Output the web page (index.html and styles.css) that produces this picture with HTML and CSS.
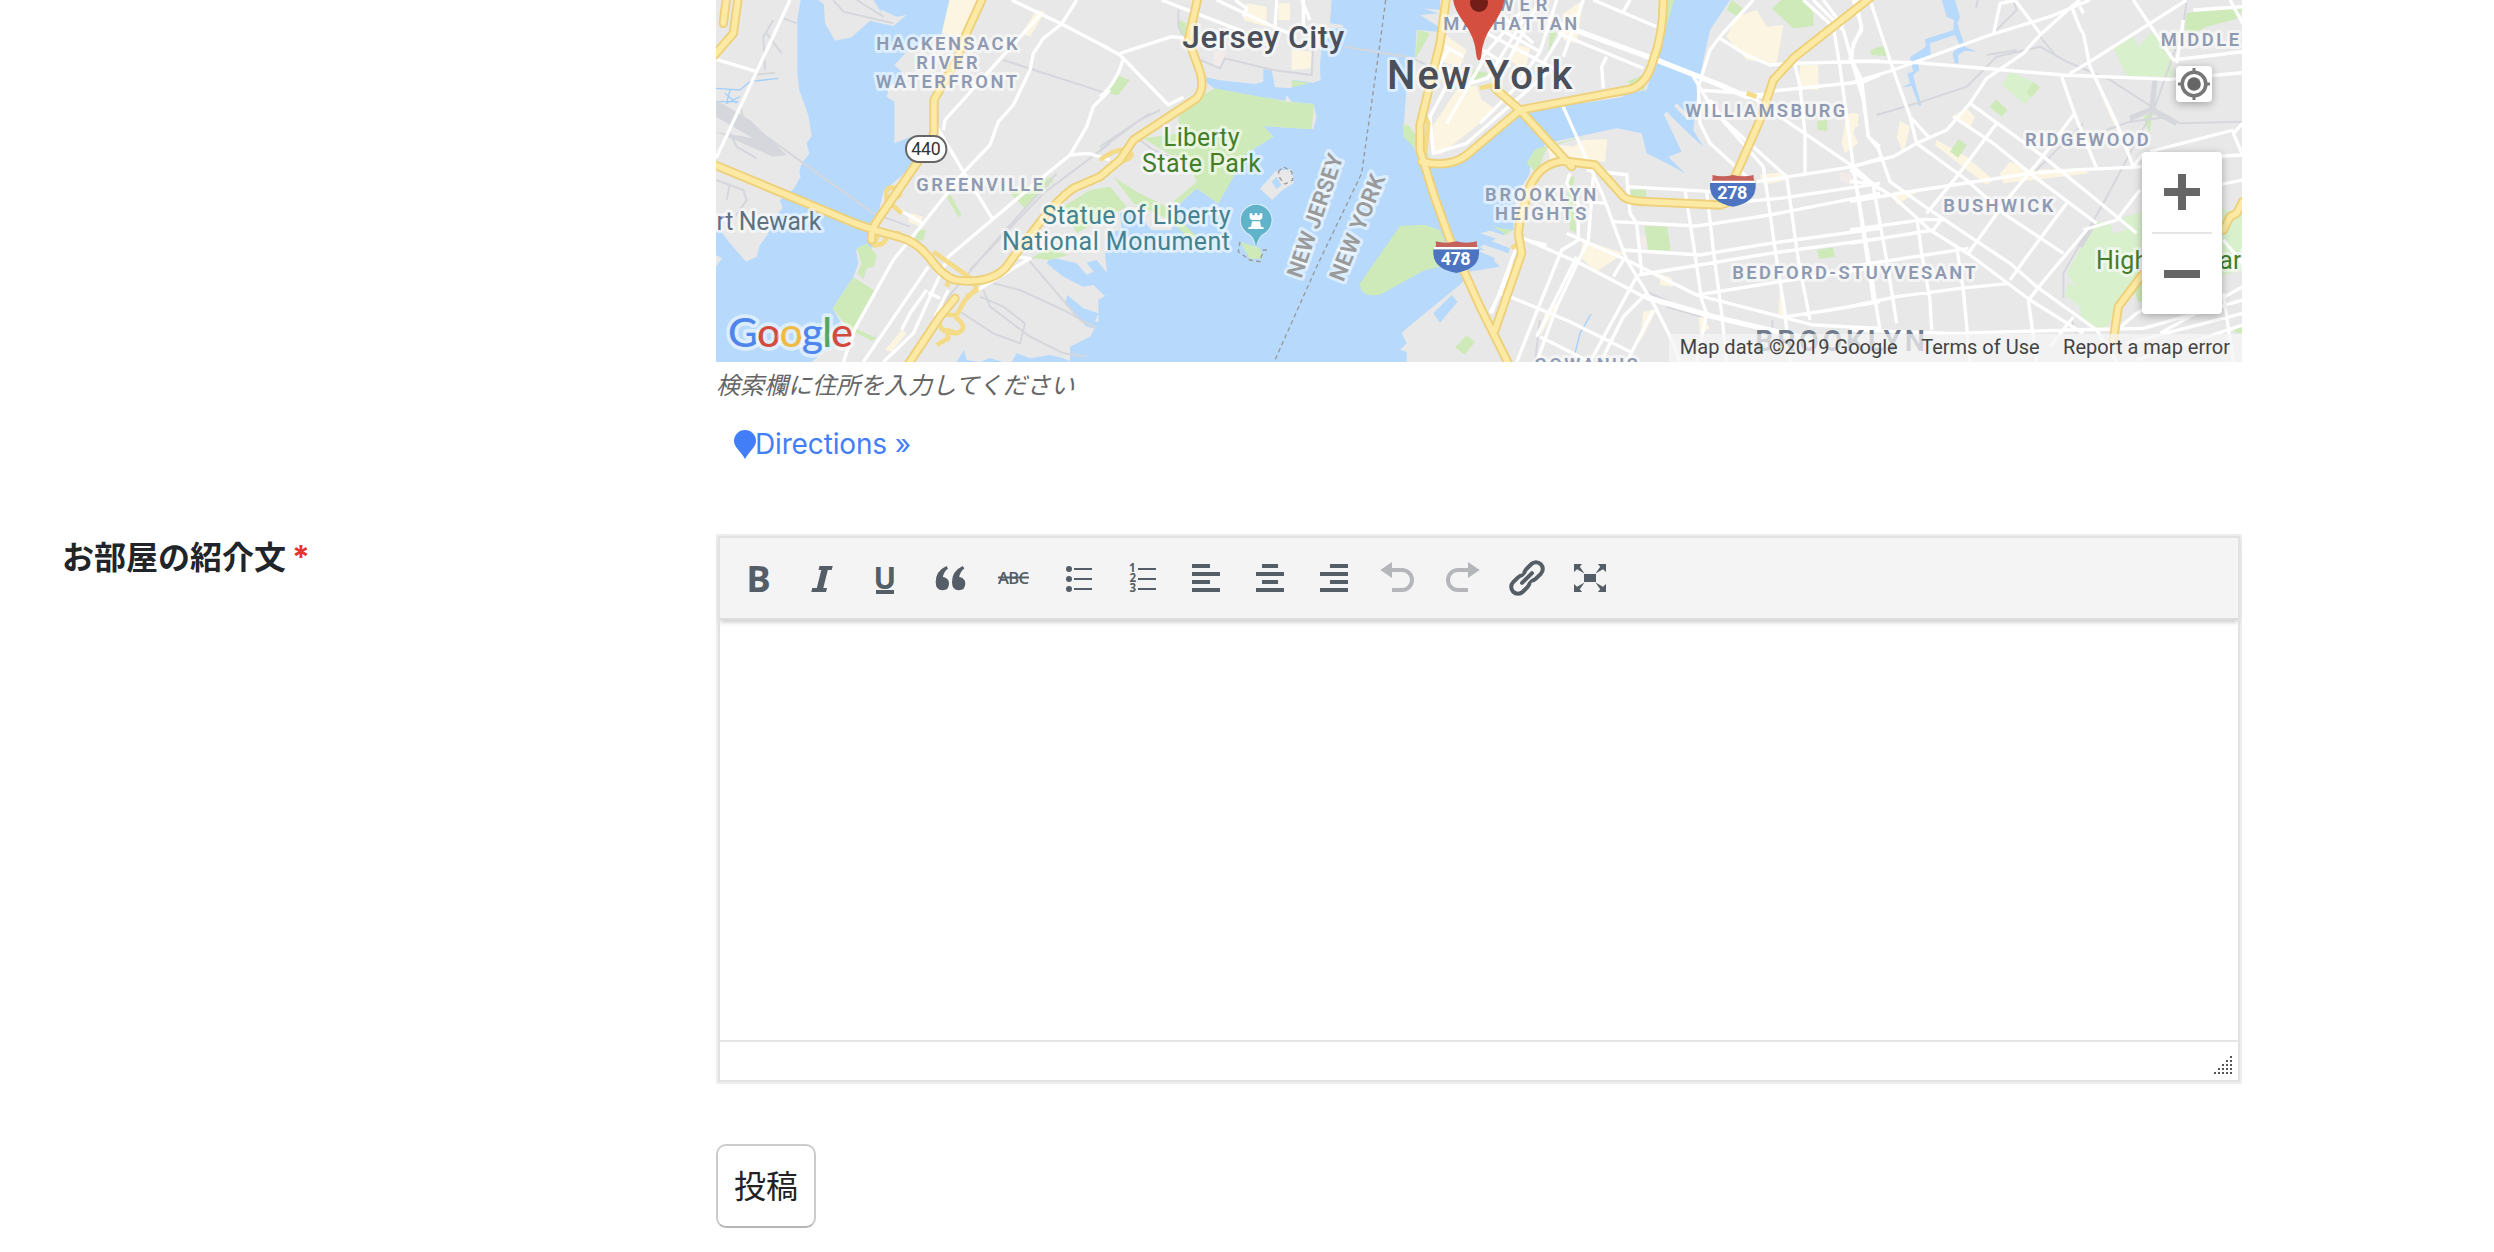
FILE: index.html
```html
<!DOCTYPE html>
<html lang="ja">
<head>
<meta charset="utf-8">
<title>お部屋の紹介文</title>
<link rel="stylesheet" href="styles.css">
</head>
<body>
<main class="form">
  <section class="row row-map">
    <div class="field">
      <div class="map">
        <svg class="map-canvas" viewBox="0 0 4578 1086">
          <rect class="land" width="4578" height="1086"/>
          <!-- water -->
          <g class="water">
            <g transform="translate(-18)">
              <path d="M272 0L262 60V220L268 270L295 345L305 408L290 430L298 462L275 490L268 515L272 530L250 568L210 600L218 625L185 660L175 700L150 735L140 770L108 785L60 730L30 690L18 695V765L36 775L18 800V1086H305L340 1055L400 1030L410 1000L368 925L430 832L445 790L438 750L500 740L505 640L520 575L610 495L600 412L553 430V305L530 290L540 255L575 250V215L553 195L595 150L700 100L720 0H490L515 40L512 28L560 50L590 45L550 78L480 62L425 112L375 122L345 70L342 14L325 0Z"/>
              <path d="M1010 790L1022 772L1100 790L1130 825L1150 815L1130 788L1160 780L1200 830V870L1185 888L1150 855L1120 860L1060 830Z"/>
              <path d="M1065 912L1072 885L1120 925L1165 940L1155 965L1175 965L1160 987L1130 980Z"/>
              <path d="M740 1086L762 1050L770 1080L810 1086L838 1074L880 1086ZM905 1086L920 1060L960 1075L1020 1065L1060 1075L1085 1086L1090 1040L1140 1070L1150 1050L1200 1030V1086Z"/>
            </g>
            <g transform="translate(1152)">
              <path d="M695 0L690 70L730 75L728 85L680 85L690 110L665 130L660 200L662 240L640 248L580 240L575 265L525 262L515 210L490 208V245L465 252L355 240L322 232L315 245L350 270L555 302L560 285L575 305L640 312L650 350L640 388L490 378L520 410L440 460L400 530L355 610L290 565L230 620L215 690L155 690L100 630L60 640L65 690L20 700L30 740L15 760L22 825L10 850L20 885L-5 900V965L-30 1010L-90 1040V1086H920V1055L900 1050L920 1030L905 1000L920 985L1085 850L1105 815L1200 800L1140 740L1240 690L1245 590L1290 520V480L1340 430L1480 400L1550 385L1625 400L1640 460L1700 490L1665 525L1700 490L1755 520L1705 470L1745 455L1690 340L1760 395L1810 440L1780 390L1795 250L1830 90L1890 0H1720L1685 120L1640 270L1270 330L1090 475L1000 505L975 500L940 440L910 400L918 280L945 180L950 90L1015 95V80L960 45L1015 40L970 25L1020 30V0Z"/>
            </g>
            <g transform="translate(3402)">
              <path d="M275 0L290 50L312 60L310 90L225 118L228 140L180 172L190 215L172 220L180 250L158 262L185 258L207 318L214 315L195 248L190 225L208 210L204 185L243 170L240 130L315 105L330 135L308 160L314 190H326L324 165L345 152L380 155L345 140L322 70L330 50L315 0Z"/>
            </g>
          </g>
          <g class="land">
            <path transform="translate(1152)" d="M480 566L528 512L575 508L582 548L545 572L517 600Z"/>
            <path transform="translate(2292)" d="M0 700L30 692L100 715L90 730ZM0 750L80 760L70 780L0 765ZM560 335L625 400L610 400L550 345ZM590 310L630 350L622 360L582 318ZM310 300L430 285L428 292L315 308Z"/>
          </g>
          <path class="water" transform="translate(1152)" d="M1000 940L1055 885L1073 905L1020 968ZM308 555L316 542L328 570L315 572ZM515 545L530 530L545 555L530 568Z"/>
          <path class="water" transform="translate(2292)" d="M0 710L90 745L85 760L0 730ZM0 755L45 775L40 785L0 775Z"/>
          <path class="creek" transform="translate(-18)" d="M18 265L90 270L120 245L205 235M18 305H85M45 280L80 310M60 270L50 310L90 290"/>
          <path class="creek" transform="translate(2292)" stroke-width="7" d="M333 942L300 1000L285 1060"/>
          <!-- commercial blocks -->
          <g class="block">
            <path transform="translate(-18)" d="M718 0H820L755 110L695 100ZM980 30L1005 35L960 110L935 100ZM600 640L640 650L630 680L595 665ZM575 990L590 1000L545 1055L525 1050Z"/>
            <path transform="translate(1152)" d="M1000 375L1070 270L1130 255L1145 300L1190 330L1020 465L1000 455ZM1030 100L1100 150L1080 200L1010 180ZM575 150L635 155V205L575 210ZM440 10L500 20V80L430 60ZM535 10H570V60H535Z"/>
            <path transform="translate(2292)" d="M770 50L830 30L860 80L910 75L890 190L800 180L740 110ZM960 195H1015V270L955 265ZM200 430L280 440L310 420L382 418L375 485L210 480ZM310 720L430 760L350 815L300 770ZM840 525L910 515L920 540L850 555ZM100 130L150 145L135 220L90 180ZM250 40L310 0L290 130L250 120ZM540 820L575 835L580 860L540 855ZM900 870L915 945L895 945ZM655 930L690 985L660 1000ZM490 935L530 930L480 1025ZM195 940L240 900L180 1010ZM1100 340L1135 345L1120 400L1135 430L1095 460L1085 430Z"/>
            <path transform="translate(3402)" d="M0 340H25V380H0ZM150 362L180 380L160 460L140 410ZM305 350L350 325L375 350L360 380ZM260 420L350 470L430 540L410 555L255 435ZM480 485L540 510L690 505L720 520L460 550L450 520ZM750 280L820 400L840 455L795 380ZM130 575L210 570L140 615Z"/>
          </g>
          <path class="clinic" transform="translate(1152)" d="M342 150L378 158L360 200L340 195Z"/>
          <path class="clinic" transform="translate(2292)" d="M1080 515L1130 525L1115 555L1080 540ZM478 710L500 710V745H485Z"/>
          <!-- parks -->
          <g class="park">
            <g transform="translate(-18)">
              <path d="M430 832L495 872L435 985L500 1015L485 1022L440 1000L425 1000L368 925ZM440 745L470 730L500 765L492 800L470 805L460 838L442 820L455 790ZM625 690L648 690L640 720L612 725ZM710 590L722 585L755 645L745 652ZM900 580L1025 530L1030 545L945 625Z"/>
              <path d="M1060 620L1140 570L1200 560L1250 620L1100 700Z"/>
              <path d="M965 775L1010 745L1075 765L1020 780Z"/>
            </g>
            <g transform="translate(1152)">
              <path d="M345 265L560 305L642 312L635 388L490 378L520 410L440 460L400 530L355 610L290 565L240 610L220 605L290 545L270 500L130 415L240 400L235 350L300 290Z"/>
              <path d="M40 530L110 575L200 620L290 710L265 715L210 660L100 610Z"/>
              <path d="M50 225L90 240L55 285L20 280ZM235 60L260 70L255 110L240 100ZM575 240L630 250L575 262Z"/>
              <path d="M900 678L975 674L1020 690L1060 790L970 812L840 884Q780 895 780 850Z"/>
              <path d="M1100 1006L1125 1027L1093 1064L1066 1042ZM953 90L990 100L945 180ZM908 370L930 380L990 470L970 470L910 410ZM1120 210L1170 220L1110 250Z"/>
              <path d="M420 725L480 745L490 775L450 778Z"/>
            </g>
            <g transform="translate(2292)">
              <path d="M565 0H582L545 130L490 275L440 245L500 220L550 100Z"/>
              <path d="M875 25L905 0H975L1000 40V78L940 85ZM755 0L788 25L770 48L740 30ZM1172 150L1200 140V168ZM1012 362L1042 360V392L1012 390ZM1010 750L1060 742L1065 770L1018 777ZM493 678L562 680L572 752L505 750ZM450 570L498 568V592L455 592ZM140 490L165 448L320 405L200 445L170 520ZM260 530L285 530L275 570L290 700L270 690ZM40 680L95 690L80 705ZM210 90L230 100L205 160Z"/>
            </g>
            <g transform="translate(3402)">
              <path d="M60 155L105 135L115 168L65 165ZM300 455L325 418L350 435L325 473ZM420 320L438 298L472 330L455 350ZM528 280L548 245L570 262L545 292ZM880 355L912 320L898 400ZM850 860L880 840V900L865 908ZM1010 38L1178 25L1165 55L1070 80L1030 100L1005 90ZM1150 980H1176V1000L1155 998Z"/>
            </g>
          </g>
          <path class="park-light" transform="translate(3402)" d="M455 255L482 215L550 245L528 280L545 290L525 313ZM790 145L850 110L865 140L905 95L960 150L970 230L830 228ZM735 665L780 668L790 700L830 690L810 655L1000 600L1178 640V810L1000 860L880 820L800 940L770 980L740 985L695 955L690 920L645 885L655 850L680 860L650 820Z"/>
          <path class="rail-fill" transform="translate(-18)" d="M18 300L120 360L230 465L190 470L18 395L130 415L18 350Z"/>
          <!-- railways -->
          <g class="rail">
            <path transform="translate(-18)" d="M90 310L100 360L490 640L600 680M60 400L80 440L140 475M370 0L400 35L550 70M440 0L520 50M165 210L160 110L190 60M170 100L215 160M220 55L260 70M130 225L195 218M880 180L1190 280M18 540L100 570L110 600L60 670M60 550L50 600M820 870L840 920L960 1010L1060 1060L1130 1070M850 850L930 870L1060 930L1150 980M750 935L850 1000L930 1030L945 970L880 920L810 890M780 810L1000 580L1200 430M690 920L860 720L1040 520M960 785L1110 960L1160 985"/>
            <path transform="translate(1152)" d="M0 450L120 360L180 330M0 440L150 340M235 30V80L300 180L360 205L375 175L520 210L635 225L640 120M735 140L930 172L990 200M120 420L160 450L260 490"/>
            <path transform="translate(2292)" d="M500 875L600 920L665 945M560 920L665 950M180 960L165 1086M877 960V985M1190 345L1200 340"/>
            <path transform="translate(3402)" d="M80 345L200 310L350 260L440 170L570 140L650 185L780 240L920 330L990 370L1178 365M410 165L500 150M430 100L500 30L490 0M378 25L383 0M570 110L620 170M1010 0L1000 80L915 320L760 610L640 820V895M840 360L900 330M770 390L840 365L960 350M550 520L700 370M660 950L680 1000"/>
            <path stroke-width="16" transform="translate(3402)" d="M840 355L900 330M915 240L905 330L980 370M735 665L690 740"/>
          </g>
          <!-- local streets -->
          <g class="street">
            <g transform="translate(-18)">
              <path d="M240 0L140 215L18 475M18 178L138 214M905 0L1055 72L1200 148M1100 0L1055 72L1000 115L970 160L960 210L910 315L865 365L840 435L760 518L640 670L550 780L435 985L400 1086M990 45L705 360L700 390M680 380L760 515L850 660M1200 270L1150 320L1130 380L1080 465L1000 530L715 770M1080 465L1135 460L1200 480M560 625L635 668M715 770L610 1000L520 1086M655 800L460 1086M770 890L910 805L960 775L915 770M715 870L690 920L675 950M655 878L690 895M575 990L600 940L650 870"/>
            </g>
            <g transform="translate(1152)">
              <path d="M0 132L60 165L205 315L250 292M60 160L215 110L260 115M70 175Q50 250 0 290M185 0L430 95M350 0L530 85L570 100M530 0L525 80M605 0L630 60M610 0V90M405 0L440 25L430 50M1048 145L1015 200L1060 220L990 350L1000 460L1100 430L1340 220M1150 180L1040 370M1020 130L1090 170M1110 250L1160 235M1170 940L1240 800L1270 740"/>
            </g>
            <g transform="translate(2292)">
              <path d="M120 40L0 180M130 60L20 240M180 0L60 230M230 0L180 155L120 240M270 60L190 190M310 0L250 170M20 100L240 215M65 90L180 155M70 50L160 130M235 100L490 205M0 145L90 200M380 170L365 200L370 265M0 370L120 250"/>
              <path d="M245 310L330 500L370 590L440 780L520 910L580 1030L600 1086"/>
              <path d="M340 0L530 80M450 0L430 35M820 0L720 110L690 150L655 260L660 370L690 430L800 530M655 270L800 280L930 370L1120 500L1200 570M720 115L800 165L870 195L940 190L1200 183M640 230L700 330L850 500L890 780L915 940L930 1086M690 300L730 360L920 530L955 780L990 960M945 195L960 260L975 400L975 520M970 0L1060 80L1080 200L1120 500L1150 700L1180 900M1000 0L1090 90L1115 180L1150 300L1165 410L1200 440M1030 0L1090 80M1120 0L1145 80L1115 150L1110 180M860 275L1150 245L1200 225M830 545L1120 500L1200 475M730 610L900 595L1200 550M400 665L650 678L740 665L870 645L1200 580M430 750L660 765L870 730L1200 685M475 825L870 760L1200 715M440 560L700 575M615 570L640 730L665 900L680 940L650 1086M680 575L700 750L725 940L740 1086M650 885L900 845L1200 800M920 950L1050 930L1200 905"/>
              <path d="M130 715L300 790L510 900M260 700L440 780L650 885L1000 975L1200 985M440 525L450 640L470 670L485 820M320 510L445 525M340 530L325 720L230 920L170 1086M270 520L260 550L295 610V720L245 750L160 960L110 1086M290 770L170 1010M430 780L400 830M470 830L330 1086M500 880L430 950L370 1070M90 890L270 965L460 1060M180 1010L330 1086M110 740L35 940M55 880L95 890M320 605L380 610M140 720L200 735M520 930L440 1086"/>
            </g>
            <g transform="translate(3402)">
              <path d="M20 0L35 90L10 130L5 180L35 240L55 410L85 445L120 545L225 620L345 700L480 790L560 860L740 990L800 1086M60 0L130 210L180 350L235 410M180 350L200 430M0 183L200 188L460 210L640 225L960 238L1178 218M0 250L130 210L420 105L600 50L720 0M430 105L450 10L500 0M495 0L570 100M690 0L670 15L570 105L520 160L410 235L360 310L290 390L200 430L130 470L0 500M665 20L690 85L700 100L720 200L800 370L850 500M700 40L690 20M1010 0L900 70L720 185L660 220M850 0L970 180L1178 155M1140 0L1178 70M635 230L675 345L740 505M670 345L570 480L470 600L355 760M440 370L320 530L230 640M360 310L580 470L740 600L860 700M310 350L430 430L540 520L740 670M200 430L350 540L460 640L640 760M0 510L130 590L240 690L360 765L540 900L700 1000"/>
              <path d="M0 605L210 570L540 520L700 508L780 505L880 500M0 690L225 658L280 660M0 730L250 690L280 650M0 800L355 745M0 920L140 890L330 865L480 850M700 690L800 660L870 570M650 610L530 770L480 840M710 690L600 820L535 900L550 1010L560 1086M0 545L70 550M20 560L60 800L90 990M70 560L110 780L140 970M200 650L215 760L240 900L245 990M320 740L340 870L360 1086M0 990L300 1000L660 990L880 985L1178 900M670 950L600 1040M800 990L860 940L960 880M1178 370L1150 400L1178 465L900 480M1150 390L900 455M830 1030L1178 940M860 1080L1178 975M930 1000L1178 860M1120 880L1150 1086M850 500L880 460M1030 30L1178 20M980 190L1000 60M1120 720L1178 790M1080 560L1178 540"/>
            </g>
          </g>
          <path class="street wide" transform="translate(2292)" d="M230 70L530 180L720 255L800 290L860 285M510 895L700 950L870 990L1000 1020"/>
          <!-- highways -->
          <g class="ramp">
            <path transform="translate(-18)" d="M540 625Q510 550 560 565Q590 590 530 600L575 640M515 690Q480 745 500 735Q530 735 530 700L570 700M670 755L790 840L800 870L770 890M710 860L720 830M680 945H740L765 900L795 870M735 950Q780 985 740 1000Q690 1000 690 970M740 1000L710 990L715 1015L680 1035"/>
            <path transform="translate(1152)" d="M0 480Q60 435 90 455Q110 480 30 490M975 350L985 370L975 460M1185 1010L1210 930"/>
            <path transform="translate(2292)" d="M800 280L830 290M0 265L40 255M95 745L130 720M60 960L45 1000"/>
          </g>
          <g class="hw-edge">
            <use href="#highways"/>
          </g>
          <g class="hw">
            <g id="highways">
              <path transform="translate(-18)" d="M815 0L765 110L740 180L672 300V385Q675 420 620 490L510 650Q480 690 485 720"/>
              <path transform="translate(-18)" d="M10 493L440 672L500 692L570 712Q620 725 660 775Q700 830 735 840Q840 855 890 800Q910 770 980 680Q1040 600 1090 565L1170 530L1230 480L1270 420L1460 295Q1485 265 1470 215L1435 120L1462 0"/>
              <path transform="translate(-18)" d="M85 -10L70 100L5 175M50 -10L40 70"/>
              <path transform="translate(-18)" d="M735 895L690 950L590 1100"/>
              <path transform="translate(1152)" d="M1038 0L1020 130L960 375V450L1000 580L1050 720L1140 920L1230 1100"/>
              <path transform="translate(1152)" d="M965 485Q1050 505 1100 465L1260 330L1590 268Q1640 255 1660 180Q1690 100 1690 0M1185 265L1260 330L1415 500"/>
              <path transform="translate(2292)" d="M45 990L125 760L115 700L120 660L150 560Q180 490 250 483L345 495L430 590Q445 603 500 605L720 615L765 600M765 530L840 360L880 240L945 170L1200 -30"/>
              <path transform="translate(3402)" d="M790 1020L805 920L880 820M1120 690L1140 650L1160 640L1178 605"/>
            </g>
          </g>
          <!-- state border and island outlines -->
          <path class="border" transform="translate(1152)" d="M857 0L840 130L785 520L650 800L525 1080"/>
          <path class="border" transform="translate(1152)" d="M535 515L550 500L575 515L578 540L555 552L540 535ZM420 725L415 755L450 780L480 785L490 750H505"/>
          <!-- route badges -->
          <g transform="translate(-18)">
            <rect class="route" x="588" y="408" width="121" height="78" rx="38"/>
            <text class="route-num" x="648" y="465" textLength="88">440</text>
          </g>
          <g id="shield" transform="translate(2152 724)">
            <path fill="#c5625c" d="M5 22Q10 10 7 0Q38 8 69 0Q100 8 131 0Q128 10 135 22Z"/>
            <path fill="#4c74c0" d="M0 24H137V34Q137 83 69 95Q0 83 0 34Z"/>
            <path fill="#fff" d="M2 17H135V24H2Z"/>
          </g>
          <text class="shield-num" x="2219" y="794" textLength="90">478</text>
          <use href="#shield" x="830" y="-199"/>
          <text class="shield-num" x="3049" y="597" textLength="90">278</text>
          <!-- monument pin -->
          <g transform="translate(1152)">
            <path class="poi" d="M468 740Q462 707 442 698A46 46 0 1 1 495 698Q475 707 468 740Z"/>
            <path fill="#fff" d="M449 640H457V646H464V640H472V646H479V640H487V655L480 660H455L449 655ZM456 664H480L483 680L491 682V687H445V682L453 680Z"/>
          </g>
          <!-- labels -->
          <g class="area">
            <g transform="translate(-18)">
              <text x="499" y="149" textLength="424">HACKENSACK</text>
              <text x="619" y="206" textLength="184">RIVER</text>
              <text x="497" y="263" textLength="424">WATERFRONT</text>
              <text x="619" y="574" textLength="380">GREENVILLE</text>
            </g>
            <g transform="translate(2292)">
              <text x="-48" y="32" textLength="250">LOWER</text>
              <text x="-110" y="89" textLength="402">MANHATTAN</text>
              <text x="616" y="352" textLength="480">WILLIAMSBURG</text>
              <text x="15" y="604" textLength="334">BROOKLYN</text>
              <text x="45" y="661" textLength="274">HEIGHTS</text>
              <text x="757" y="836" textLength="730">BEDFORD-STUYVESANT</text>
              <text x="163" y="1113" textLength="310">GOWANUS</text>
            </g>
            <g transform="translate(3402)">
              <text x="932" y="139" textLength="235">MIDDLE</text>
              <text x="525" y="439" textLength="371">RIDGEWOOD</text>
              <text x="280" y="637" textLength="330">BUSHWICK</text>
            </g>
          </g>
          <text class="borough" x="3118" y="1053" textLength="509">BROOKLYN</text>
          <g class="city">
            <text x="1399" y="145" font-size="95" textLength="486">Jersey City</text>
            <text x="2013" y="266" font-size="120" textLength="556">New York</text>
          </g>
          <text class="town" x="-40" y="689" textLength="356">ort Newark</text>
          <g class="green">
            <text x="1342" y="437" textLength="229">Liberty</text>
            <text x="1278" y="515" textLength="357">State Park</text>
            <text x="4140" y="806" textLength="475">Highland Park</text>
          </g>
          <g class="teal">
            <text x="978" y="671" textLength="566">Statue of Liberty</text>
            <text x="858" y="749" textLength="684">National Monument</text>
          </g>
          <g class="state">
            <text transform="translate(1756 838) rotate(-71)" textLength="388">NEW JERSEY</text>
            <text transform="translate(1882 848) rotate(-68)" textLength="338">NEW YORK</text>
          </g>
          <!-- marker -->
          <path class="marker" d="M2289 181Q2283 181 2281 165Q2277 110 2242 65Q2205 15 2212 -20A77 77 0 0 1 2366 -20Q2370 20 2330 75Q2300 115 2296 165Q2295 181 2289 181Z"/>
          <circle cx="2289" cy="9" r="27" fill="#731d19"/>
          <text class="logo" x="36" y="1040" textLength="375"><tspan fill="#5086ec">G</tspan><tspan fill="#d44b3e">o</tspan><tspan fill="#f0ba42">o</tspan><tspan fill="#5086ec">g</tspan><tspan fill="#58a65c">l</tspan><tspan fill="#d44b3e">e</tspan></text>
        </svg>
        <button class="locate" aria-label="現在地">
          <svg width="36" height="36" viewBox="0 0 36 36"><circle cx="18" cy="18" r="11.8" fill="none" stroke="#777" stroke-width="3.6"/><circle cx="18" cy="18" r="6.8" fill="#666"/><path stroke="#777" stroke-width="3" d="M18 2V8M18 28V34M2 18H8M28 18H34"/></svg>
        </button>
        <div class="zoom">
          <button aria-label="拡大"><svg width="36" height="36" viewBox="0 0 36 36"><path fill="#666" d="M14 0H22V14H36V22H22V36H14V22H0V14H14Z"/></svg></button>
          <hr>
          <button aria-label="縮小"><svg width="36" height="36" viewBox="0 0 36 36"><path fill="#666" d="M0 14H36V22H0Z"/></svg></button>
        </div>
        <div class="credits"><span>Map data ©2019 Google</span><span>Terms of Use</span><span>Report a map error</span></div>
      </div>
      <p class="hint">検索欄に住所を入力してください</p>
      <a class="directions"><svg width="22" height="29" viewBox="0 0 22 29"><path fill="#427ef8" d="M11 29Q9.500 26 4 19.500Q0 15 0 11A11 11 0 0 1 22 11Q22 15 18 19.500Q12.500 26 11 29Z"/></svg><span>Directions »</span></a>
    </div>
  </section>

  <section class="row row-editor">
    <label class="label">お部屋の紹介文<span class="required">*</span></label>
    <div class="field editor">
      <div class="toolbar">
        <svg viewBox="-20 -20 40 40"><text class="glyph" x="-11.800" y="14" font-size="36.500" font-weight="700">B</text></svg>
        <svg viewBox="-20 -20 40 40"><path d="M-2.500-12H10.700L9.700-8H5.800L1.300 10H5L4 14H-10.700L-9.700 10H-5.200L-.7-8H-3.500Z"/></svg>
        <svg viewBox="-20 -20 40 40"><text class="glyph" x="-12.500" y="10.700" font-size="30" font-weight="700" textLength="23">U</text><path d="M-10 12H8V16H-10Z"/></svg>
        <svg viewBox="-20 -20 40 40"><path id="q" d="M-3.500-12L-2-9.500Q-6.500-6-7-1Q-1 0-1 5.500Q-1 12.300-7.500 12.300Q-14.300 12.300-14.300 4Q-14.300-7-3.500-12Z"/><use href="#q" x="16.300"/></svg>
        <svg viewBox="-20 -20 40 40"><text class="glyph" x="-16" y="6" font-size="16.500" font-weight="600" textLength="31">ABC</text><path d="M-16-1.500H15V.5H-16Z"/></svg>
        <svg viewBox="-20 -20 40 40"><circle cx="-9" cy="-9" r="3"/><circle cx="-9" cy="1" r="3"/><circle cx="-9" cy="11" r="3"/><path d="M-4-10H14V-8H-4ZM-4 0H14V2H-4ZM-4 10H14V12H-4Z"/></svg>
        <svg viewBox="-20 -20 40 40"><g class="glyph" font-size="11.500" font-weight="700"><text x="-13" y="-6">1</text><text x="-12.500" y="4.300">2</text><text x="-12.500" y="14.300">3</text></g><path d="M-4-10H14V-8H-4ZM-4 0H14V2H-4ZM-4 10H14V12H-4Z"/></svg>
        <svg viewBox="-20 -20 40 40"><path d="M-14-14H4V-10H-14ZM-14-6H14V-2H-14ZM-14 2H4V6H-14ZM-14 10H14V14H-14Z"/></svg>
        <svg viewBox="-20 -20 40 40"><path d="M-8-14H8V-10H-8ZM-14-6H14V-2H-14ZM-8 2H8V6H-8ZM-14 10H14V14H-14Z"/></svg>
        <svg viewBox="-20 -20 40 40"><path d="M-4-14H14V-10H-4ZM-14-6H14V-2H-14ZM-4 2H14V6H-4ZM-14 10H14V14H-14Z"/></svg>
        <svg class="off" viewBox="-20 -20 40 40"><path d="M-17.700-8L-6-16V0Z"/><path class="line" d="M-6-8H4A10 10 0 0 1 4 12H-6"/></svg>
        <svg class="off" viewBox="-20 -20 40 40"><path d="M17.700-8L6-16V0Z"/><path class="line" d="M6-8H-4A10 10 0 0 0-4 12H6"/></svg>
        <svg viewBox="-20 -20 40 40"><g class="line" transform="translate(1 0) rotate(-45)"><rect x="-19.500" y="-6.800" width="20.500" height="13.600" rx="6.800"/><rect x="-1" y="-6.800" width="20.500" height="13.600" rx="6.800"/><path stroke="#f4f4f4" stroke-width="7.500" stroke-linecap="round" d="M-7.500 0H7.500"/><path stroke-linecap="round" d="M-7 0H7"/></g></svg>
        <svg viewBox="-20 -20 40 40"><path d="M-6-4H6V4H-6Z"/><g id="arrows"><path id="tip" d="M-16-14H-8L-10.200-11.200L-5.500-4.500L-13-8.700L-16-6Z"/><use href="#tip" transform="scale(-1 1)"/></g><use href="#arrows" transform="scale(1 -1)"/></svg>
      </div>
      <div class="content"></div>
      <div class="statusbar">
        <svg width="18" height="18" viewBox="0 0 18 18"><path fill="#555" d="M16 0h2v2h-2zM12 4h2v2h-2zM16 4h2v2h-2zM8 8h2v2H8zM12 8h2v2h-2zM16 8h2v2h-2zM4 12h2v2H4zM8 12h2v2H8zM12 12h2v2h-2zM16 12h2v2h-2zM0 16h2v2H0zM4 16h2v2H4zM8 16h2v2H8zM12 16h2v2h-2zM16 16h2v2h-2z"/></svg>
      </div>
    </div>
  </section>

  <section class="row row-submit">
    <button class="submit">投稿</button>
  </section>
</main>
</body>
</html>
```
FILE: styles.css
```css
* { box-sizing: border-box; }
body { margin: 0; background: #fff; color: #212529; font-family: Inter, "Noto Sans CJK JP", sans-serif; overflow: hidden; }
button { font: inherit; padding: 0; border: 0; background: #fff; }

.form { width: 2494px; height: 1252px; padding: 0 252px 0 62px; }
.row { display: grid; grid-template-columns: 654px 1526px; }
.row-map { height: 534px; }
.row-map .field, .row-submit .submit { grid-column: 2; }

/* Map */
.map { position: relative; width: 1526px; height: 362px; overflow: hidden; }
.map-canvas { display: block; width: 1526px; height: 362px; font-family: Roboto, sans-serif; }
.land { fill: #e8e8e8; }
.water { fill: #b6d9fc; }
.creek { fill: none; stroke: #a3d0fb; stroke-width: 4; }
.block { fill: #fbf5e1; }
.clinic { fill: #f3ebea; }
.park { fill: #ceeab8; }
.park-light { fill: #d9f0cd; }
.rail { fill: none; stroke: #d5d7dc; stroke-width: 6; }
.rail-fill { fill: #d5d7dc; }
.street { fill: none; stroke: #fff; stroke-width: 10; stroke-linejoin: round; }
.wide { stroke-width: 16; }
.ramp { fill: none; stroke: #f3db88; stroke-width: 14; stroke-linejoin: round; }
.hw, .hw-edge { fill: none; stroke-linejoin: round; stroke-linecap: round; }
.hw-edge { stroke: #edd079; stroke-width: 28; }
.hw { stroke: #fbe9a4; stroke-width: 17; }
.border { fill: none; stroke: #999; stroke-width: 4; stroke-dasharray: 13 10; }
.route { fill: #fff; stroke: #666; stroke-width: 6; }
.route-num { font-size: 53px; text-anchor: middle; fill: #333; }
.shield-num { font-size: 54px; font-weight: 700; text-anchor: middle; fill: #fff; }
.poi { fill: #60b3c8; stroke: #d9ecfa; stroke-width: 6; paint-order: stroke; }
.area, .city, .town, .green, .teal, .state { stroke: rgba(255, 255, 255, .55); stroke-width: 18; stroke-linejoin: round; paint-order: stroke; }
.area { font-size: 55px; font-weight: 600; fill: #8e9ab2; }
.borough { font-size: 86px; font-weight: 600; fill: #707b8d; }
.city { font-weight: 500; fill: #4b4f59; }
.town { font-size: 75px; fill: #5f717f; }
.green { font-size: 75px; fill: #437f2b; }
.teal { font-size: 75px; fill: #43828e; }
.state { font-size: 67px; font-weight: 600; fill: #9a9a9a; }
.marker { fill: #d44f40; }
.logo { font-family: Lato, sans-serif; font-size: 124px; font-weight: 500; stroke: rgba(255, 255, 255, .55); stroke-width: 22; stroke-linejoin: round; paint-order: stroke; }

.locate { position: absolute; left: 1460px; top: 66px; width: 36px; height: 36px; border-radius: 4px; box-shadow: 0 2px 8px rgba(0, 0, 0, .3); }
.locate svg, .zoom svg { display: block; }
.zoom { position: absolute; left: 1426px; top: 152px; width: 80px; height: 162px; display: flex; flex-direction: column; background: #fff; border-radius: 4px; box-shadow: 0 2px 8px rgba(0, 0, 0, .3); }
.zoom button { flex: 1; display: grid; place-items: center; background: none; }
.zoom hr { width: 60px; height: 2px; margin: 0 auto; border: 0; background: #e6e6e6; }
.credits { position: absolute; right: 0; bottom: 0; height: 28px; padding: 0 12px 0 11px; display: flex; gap: 23.5px; background: rgba(245, 245, 245, .72); color: #444; font: 20px/26px Roboto, sans-serif; white-space: nowrap; }

.hint { margin: 6px 0 0; font: italic 24px/32px "Noto Sans CJK JP", sans-serif; color: #666; }
.directions { display: flex; align-items: center; height: 40px; margin: 24px 0 0 18px; color: #427ef8; font-size: 28px; }
.directions span { margin-left: -1px; letter-spacing: -.15px; }

/* Editor */
.label { margin-top: -2px; font: 700 32px/46px "Noto Sans CJK JP", sans-serif; }
.required { margin-left: 6px; color: #e5342a; font-family: Inter, sans-serif; font-size: 32px; line-height: 1; }
.editor { height: 550px; display: flex; flex-direction: column; border: 2px solid #eee; outline: 2px solid #e2e2e2; outline-offset: -4px; padding: 2px; }
.toolbar { flex: none; height: 82px; padding: 0 6px; display: flex; align-items: center; background: #f4f4f4; border-bottom: 2px solid #dcdcdc; box-shadow: 0 2px 5px rgba(0, 0, 0, .22); }
.toolbar svg { width: 40px; height: 40px; margin: 0 12px; fill: #555d66; overflow: visible; }
.toolbar .glyph { font-family: "Open Sans", sans-serif; }
.toolbar .line { fill: none; stroke: #555d66; stroke-width: 4; }
.toolbar .off { fill: #b5b6ba; }
.toolbar .off .line { stroke: #b5b6ba; }
.content { flex: 1; }
.statusbar { height: 40px; border-top: 2px solid #e5e5e5; display: flex; justify-content: flex-end; align-items: flex-end; padding: 0 6px 6px; }

.row-submit { margin-top: 60px; }
.submit { width: 100px; height: 84px; padding-bottom: 4px; border: 2px solid #ccc; border-bottom-color: #b5b5b5; border-radius: 10px; color: #222; font: 32px/46px "Noto Sans CJK JP", sans-serif; }
```
